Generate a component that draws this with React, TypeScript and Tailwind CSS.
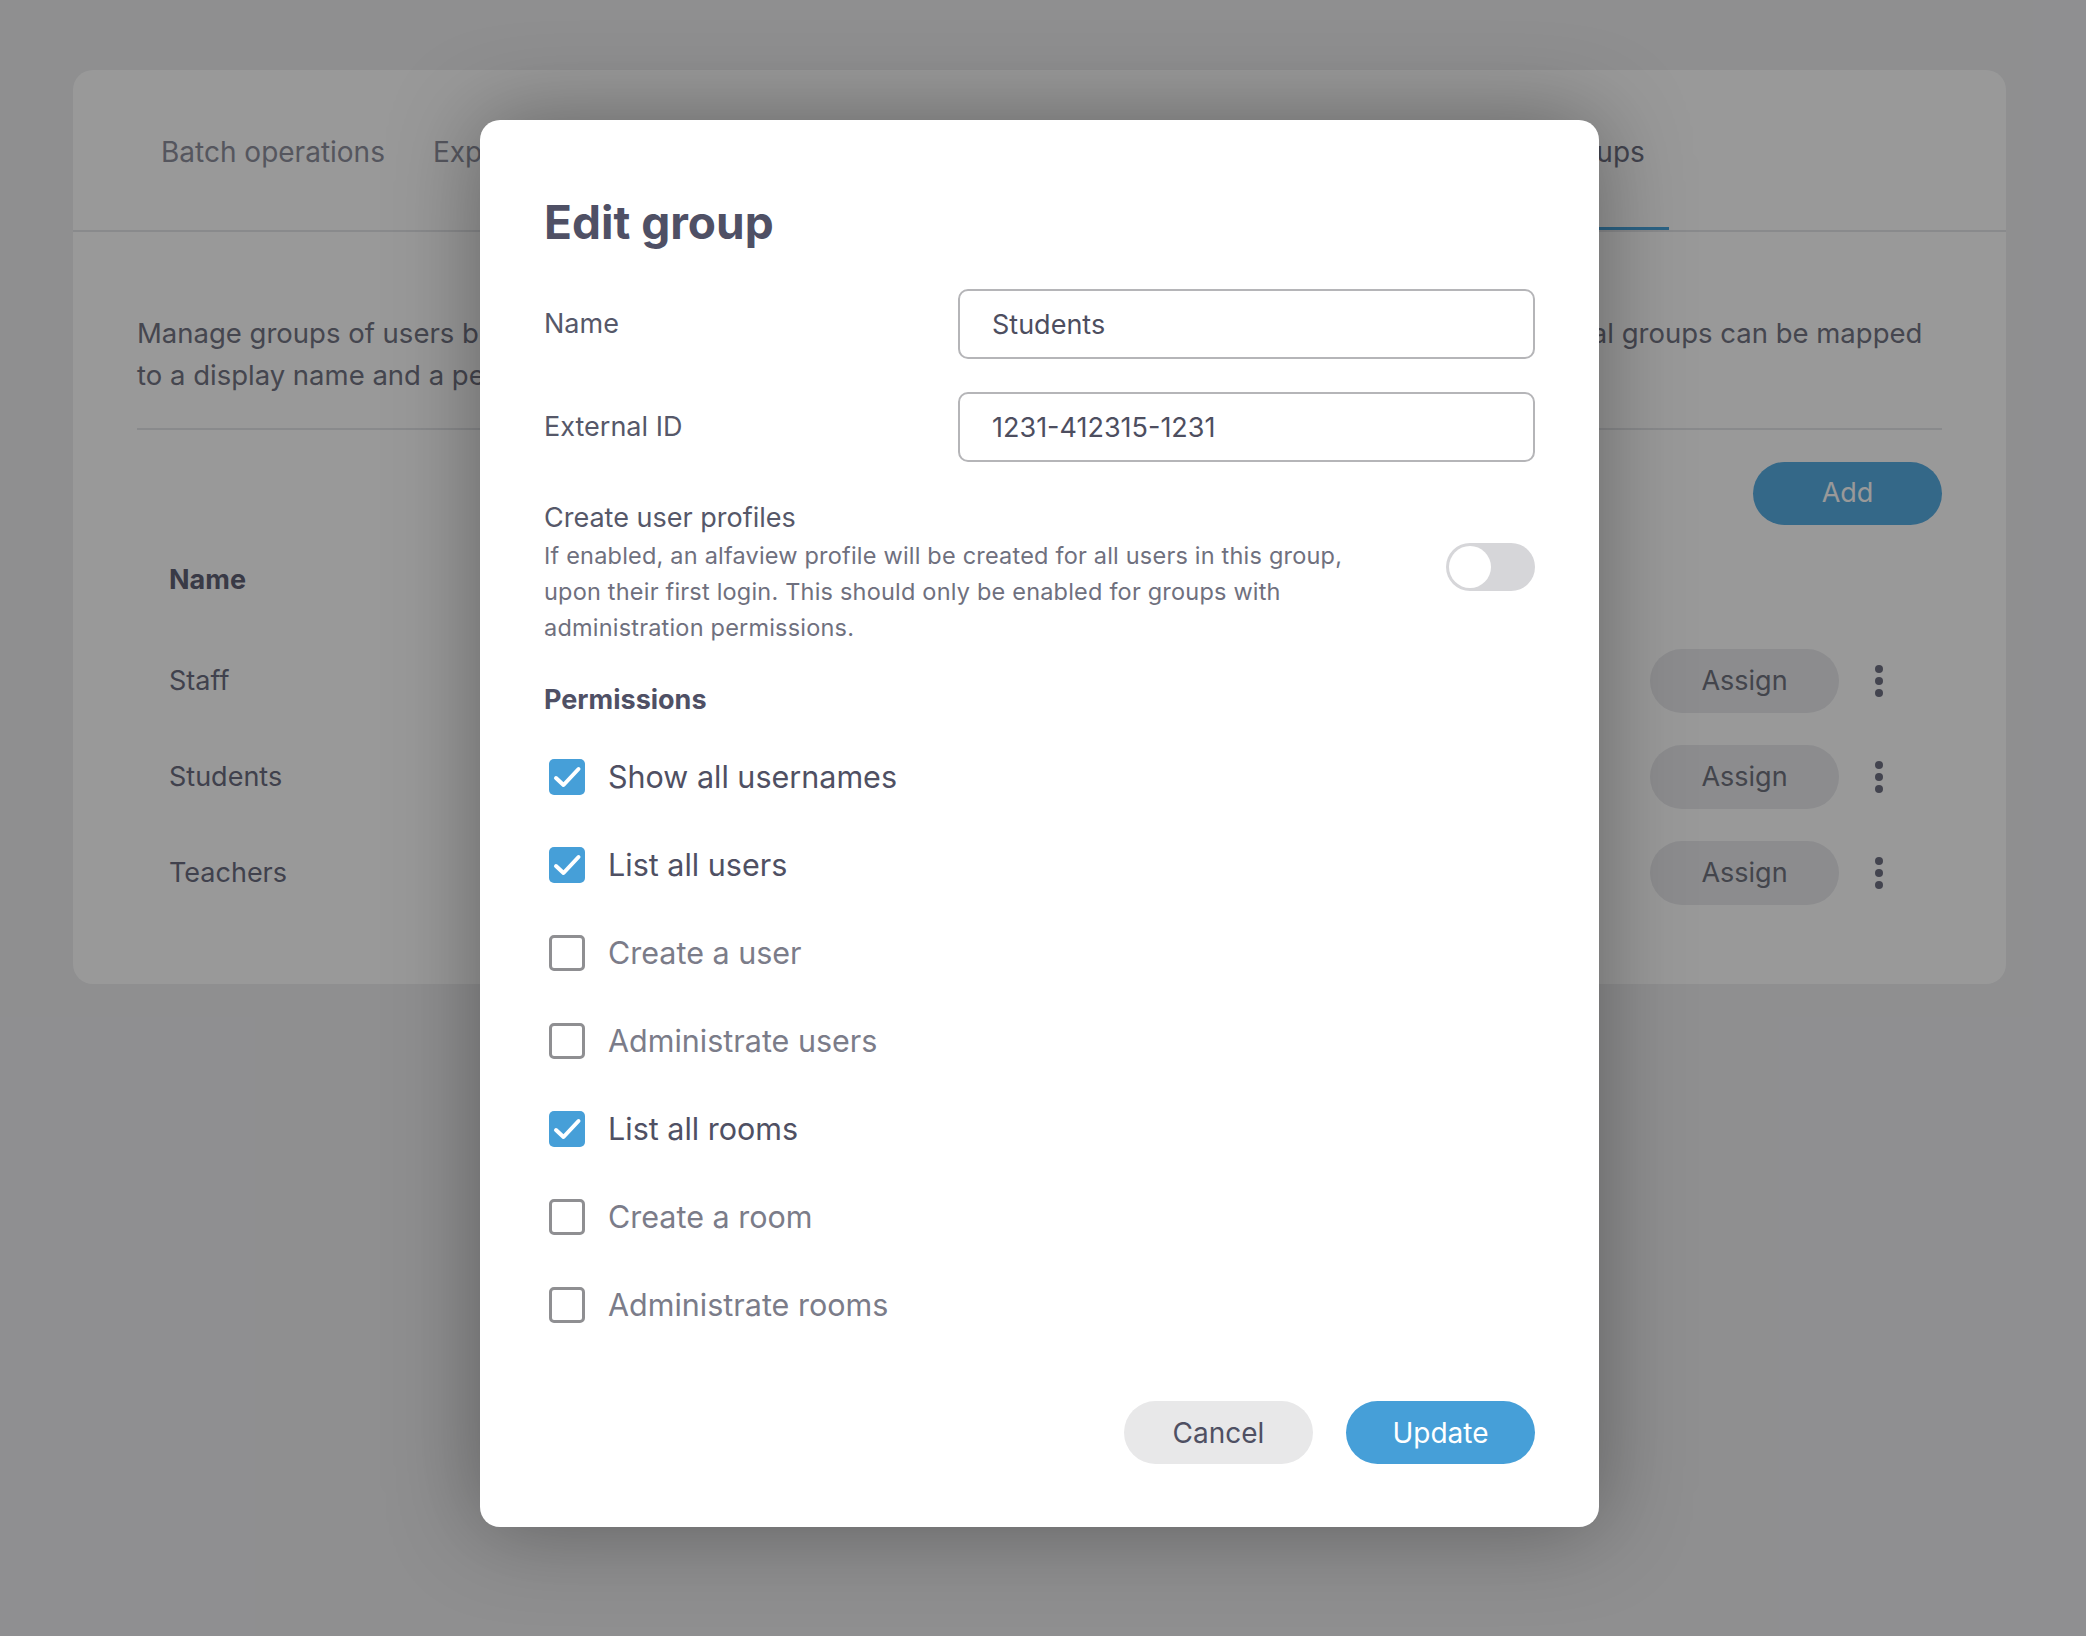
import { useState } from "react";

const permissions = [
  { label: "Show all usernames", checked: true },
  { label: "List all users", checked: true },
  { label: "Create a user", checked: false },
  { label: "Administrate users", checked: false },
  { label: "List all rooms", checked: true },
  { label: "Create a room", checked: false },
  { label: "Administrate rooms", checked: false },
];

const tabs = ["Batch operations", "Export", "Users", "Rooms", "Licenses", "Settings", "Logs", "Identity providers", "Groups"];
const groups = ["Staff", "Students", "Teachers"];

function Kebab() {
  return (
    <button className="flex h-[48px] w-[40px] items-center justify-center">
      <svg width="10" height="34" viewBox="0 0 10 34" className="fill-[#707284]">
        <circle cx="5" cy="5" r="4" />
        <circle cx="5" cy="17" r="4" />
        <circle cx="5" cy="29" r="4" />
      </svg>
    </button>
  );
}

function Checkbox({ checked }: { checked: boolean }) {
  if (checked) {
    return (
      <span className="flex h-[36px] w-[36px] items-center justify-center rounded-[5px] bg-[#469fd8]">
        <svg width="36" height="36" viewBox="0 0 36 36" fill="none">
          <polyline
            points="7,19 14.5,26 29.5,10"
            stroke="white"
            strokeWidth="4"
            strokeLinecap="round"
            strokeLinejoin="round"
          />
        </svg>
      </span>
    );
  }
  return <span className="block h-[36px] w-[36px] rounded-[5px] border-[3px] border-[#8f8f92] bg-white" />;
}

export default function App() {
  const [perms, setPerms] = useState(permissions);

  return (
    <div className="relative min-h-screen bg-[#eeeff1] pt-[70px] font-['Inter','Noto_Sans',sans-serif]">
      {/* page underneath the dialog */}
      <div className="ml-[73px] w-[1933px] rounded-[20px] bg-white pb-[63px]">
        <div className="flex h-[162px] overflow-hidden border-b-2 border-[#e5e6e9] px-[64px] pt-[4px]">
          {tabs.map((t) => (
            <div
              key={t}
              className={
                "flex shrink-0 items-center px-[24px] text-[28px] whitespace-nowrap " +
                (t === "Groups"
                  ? "-mb-[2px] ml-[5px] border-b-[5px] border-[#4aa6de] pt-[3px] text-[#6f7182]"
                  : "text-[#8e909d]")
              }
            >
              {t}
            </div>
          ))}
        </div>

        <div className="px-[64px]">
          <p className="border-b-2 border-[#e5e6e9] pt-[80px] pb-[32px] text-[27.5px] leading-[42px] text-[#737584]">
            Manage groups of users based on the groups provided by your identity providers (e. g. Active Directory). External groups can be mapped
            <br />
            to a display name and a permission set.
          </p>

          <div className="mt-[32px] flex justify-end">
            <button className="h-[63px] w-[189px] rounded-full bg-[#57ade3] text-[27px] text-white">Add</button>
          </div>

          <div className="mt-[7px] flex h-[96px] items-center pl-[32px] text-[27px] font-bold text-[#5f6175]">
            Name
          </div>
          <div className="mt-[5px]">
            {groups.map((g) => (
              <div key={g} className="flex h-[96px] items-center pl-[32px] pr-[43px]">
                <span className="flex-1 text-[27px] text-[#6b6d80]">{g}</span>
                <button className="h-[64px] w-[189px] rounded-full bg-[#e9eaed] text-[27px] text-[#71737f]">
                  Assign
                </button>
                <div className="ml-[20px]">
                  <Kebab />
                </div>
              </div>
            ))}
          </div>
        </div>
      </div>

      {/* overlay + dialog */}
      <div className="absolute inset-0 flex items-start justify-center bg-black/40 pt-[120px] pr-[7px]">
        <div className="w-[1119px] rounded-[20px] bg-white px-[64px] pt-[74px] pb-[63px] shadow-[0_0_90px_rgba(0,0,0,0.35)]">
          <h1 className="text-[46px] leading-[56px] font-bold text-[#4f5065]">Edit group</h1>

          <div className="mt-[39px] flex items-center">
            <label className="w-[414px] text-[27px] text-[#565869]">Name</label>
            <input
              defaultValue="Students"
              className="h-[70px] flex-1 rounded-[10px] border-2 border-[#b5b5b8] px-[32px] text-[27px] text-[#4d4e5f] outline-none"
            />
          </div>
          <div className="mt-[33px] flex items-center">
            <label className="w-[414px] text-[27px] text-[#565869]">External ID</label>
            <input
              defaultValue="1231-412315-1231"
              className="h-[70px] flex-1 rounded-[10px] border-2 border-[#b5b5b8] px-[32px] text-[27px] text-[#4d4e5f] outline-none"
            />
          </div>

          <div className="mt-[38px] flex items-center">
            <div className="flex-1">
              <div className="text-[27px] leading-[36px] text-[#565869]">Create user profiles</div>
              <p className="mt-[2px] max-w-[820px] text-[23.5px] leading-[36px] tracking-[0.2px] text-[#6f707e]">
                If enabled, an alfaview profile will be created for all users in this group, upon their first login. This
                should only be enabled for groups with administration permissions.
              </p>
            </div>
            <button className="-mt-[12px] flex h-[48px] w-[89px] items-center rounded-full bg-[#d6d6d9] p-[3px]">
              <span className="block h-[42px] w-[42px] rounded-full bg-white" />
            </button>
          </div>

          <div className="mt-[36px] text-[27px] leading-[36px] font-bold text-[#4f5065]">Permissions</div>

          <div className="mt-[15px]">
            {perms.map((p, i) => (
              <label
                key={p.label}
                className="flex h-[88px] cursor-pointer items-center pl-[5px]"
                onClick={() => setPerms(perms.map((q, j) => (j === i ? { ...q, checked: !q.checked } : q)))}
              >
                <Checkbox checked={p.checked} />
                <span
                  className={"ml-[23px] text-[30.5px] " + (p.checked ? "text-[#4f5063]" : "text-[#7b7c89]")}
                >
                  {p.label}
                </span>
              </label>
            ))}
          </div>

          <div className="mt-[52px] flex justify-end gap-[33px]">
            <button className="h-[63px] w-[189px] rounded-full bg-[#e8e8e9] text-[28px] text-[#4f5063]">Cancel</button>
            <button className="h-[63px] w-[189px] rounded-full bg-[#469fd8] text-[28px] text-white">Update</button>
          </div>
        </div>
      </div>
    </div>
  );
}
